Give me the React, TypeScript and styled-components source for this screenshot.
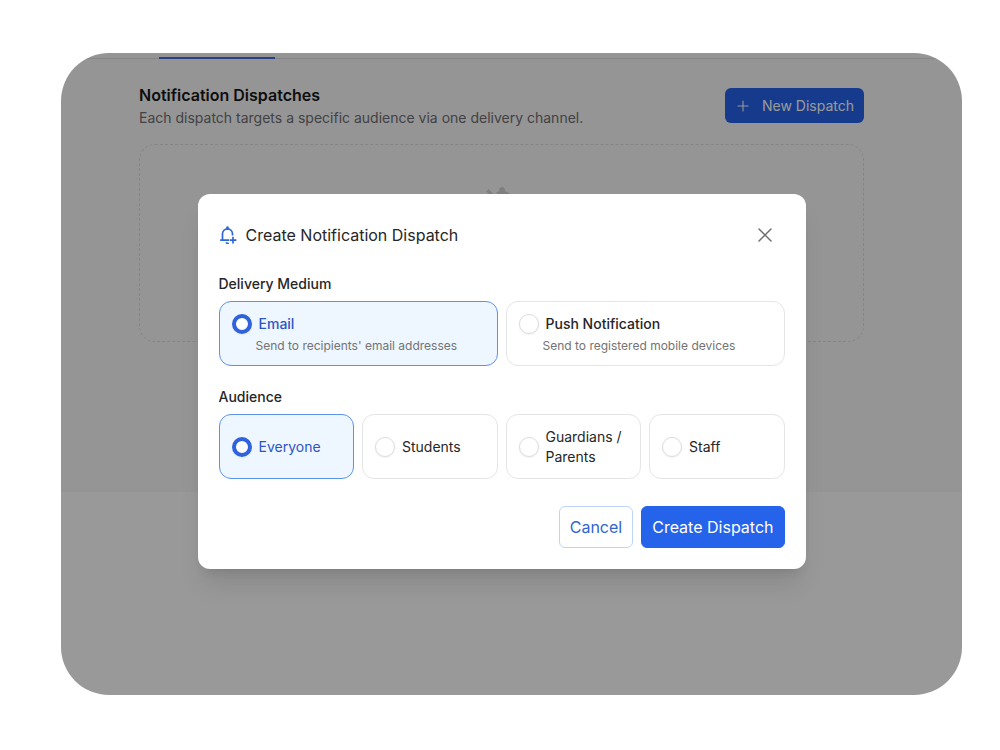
import React from "react";
import styled, { createGlobalStyle } from "styled-components";

const GlobalStyle = createGlobalStyle`
  *, *::before, *::after { box-sizing: border-box; }
  body {
    margin: 0;
    background: #ffffff;
    font-family: Inter, "Liberation Sans", sans-serif;
    color: #262626;
  }
  button, input { font-family: inherit; }
  h1, h2, p, fieldset, legend { margin: 0; padding: 0; border: 0; }
`;

const Stage = styled.div`
  min-height: 100vh;
  padding: 53px 38px 55px 61px;
  display: flex;
`;

const Frame = styled.div`
  position: relative;
  flex: 1;
  min-width: 0;
  display: flex;
  flex-direction: column;
  border-radius: 48px;
  overflow: hidden;
  background: #ffffff;
`;

const Page = styled.main`
  background: #f9f9f9;
  padding-bottom: 150px;
`;

const TabBar = styled.nav`
  height: 6px;
  padding-left: 98px;
  border-bottom: 1px solid #e2e2e4;
`;

const TabIndicator = styled.div`
  width: 116px;
  height: 6px;
  border-bottom: 2px solid #4a68dc;
`;

const Content = styled.div`
  padding: 24px 98px 0 78px;
`;

const SectionHeader = styled.header`
  display: flex;
  justify-content: space-between;
  align-items: center;
  padding-bottom: 16px;
`;

const SectionHeading = styled.div`
  display: grid;
  gap: 1px;
`;

const SectionTitle = styled.h1`
  font-size: 16px;
  line-height: 24px;
  font-weight: 600;
  color: #171717;
`;

const SectionText = styled.p`
  font-size: 14px;
  line-height: 20px;
  color: #6f6f72;
`;

const NewButton = styled.button`
  display: flex;
  align-items: center;
  gap: 11px;
  height: 35px;
  padding: 0 10px;
  border: 0;
  border-radius: 6px;
  background: #2563eb;
  color: #ffffff;
  font-size: 14px;
`;

const EmptyState = styled.section`
  min-height: 198px;
  padding-top: 37px;
  border: 1px dashed #dededf;
  border-radius: 16px;
  display: flex;
  justify-content: center;
  align-items: flex-start;
`;

const Backdrop = styled.div`
  position: absolute;
  inset: 0;
  padding: 141px 20px 0 0;
  display: flex;
  justify-content: center;
  align-items: flex-start;
  background: rgba(0, 0, 0, 0.4);
`;

const Modal = styled.form`
  width: 100%;
  max-width: 608px;
  padding: 20px 21px 21px;
  border-radius: 12px;
  background: #ffffff;
  box-shadow: 0 20px 25px -5px rgba(0, 0, 0, 0.1), 0 8px 10px -6px rgba(0, 0, 0, 0.1);
`;

const ModalHeader = styled.header`
  display: flex;
  align-items: center;
  gap: 9px;
  height: 42px;
  margin-bottom: 18px;
`;

const ModalTitle = styled.h2`
  flex: 1;
  font-size: 16px;
  line-height: 24px;
  font-weight: 400;
`;

const CloseButton = styled.button`
  display: grid;
  place-items: center;
  width: 40px;
  height: 40px;
  padding: 0;
  border: 0;
  background: none;
  color: #6f6f6f;
`;

const Group = styled.fieldset`
  min-width: 0;
  margin-bottom: 21px;
`;

const GroupLabel = styled.legend`
  font-size: 14px;
  line-height: 20px;
  font-weight: 500;
  margin-bottom: 7px;
`;

const Options = styled.div<{ $columns: number }>`
  display: grid;
  grid-template-columns: repeat(${(p) => p.$columns}, minmax(0, 1fr));
  gap: 8px;
`;

const OptionCard = styled.label<{ $selected: boolean }>`
  display: flex;
  flex-direction: column;
  justify-content: center;
  min-height: 65px;
  padding: 0 12px;
  border: 1px solid ${(p) => (p.$selected ? "#5b93ea" : "#e5e5e5")};
  border-radius: 12px;
  background: ${(p) => (p.$selected ? "#eef6ff" : "#ffffff")};
  color: ${(p) => (p.$selected ? "#2f55c4" : "#262626")};
`;

const OptionRow = styled.span`
  display: flex;
  align-items: center;
  gap: 7px;
`;

const Radio = styled.input`
  appearance: none;
  flex: none;
  width: 20px;
  height: 20px;
  margin: 0;
  border: 1px solid #dcdcdc;
  border-radius: 50%;
  background: #ffffff;
  box-shadow: 0 1px 2px rgba(0, 0, 0, 0.06);
  &:checked {
    border: 4px solid #2f62dc;
  }
`;

const OptionName = styled.span<{ $strong?: boolean }>`
  font-size: 14px;
  line-height: 20px;
  font-weight: ${(p) => (p.$strong ? 500 : 400)};
`;

const OptionText = styled.span`
  padding: 4px 0 0 24px;
  font-size: 12px;
  line-height: 16px;
  color: #737373;
`;

const Actions = styled.footer`
  display: flex;
  justify-content: flex-end;
  gap: 8px;
  padding-top: 6px;
`;

const ActionButton = styled.button<{ $primary?: boolean }>`
  height: 42px;
  padding: 0 10px;
  border: 1px solid ${(p) => (p.$primary ? "#2563eb" : "#bfd5f7")};
  border-radius: 6px;
  background: ${(p) => (p.$primary ? "#2563eb" : "#ffffff")};
  color: ${(p) => (p.$primary ? "#ffffff" : "#2f66cf")};
  font-size: 16px;
`;

const BellPlusIcon = () => (
  <svg width="18" height="18" viewBox="0 0 18 18" fill="none" stroke="#2f66d6" strokeWidth="1.7" aria-hidden="true">
    <path d="M1.2 14.2H10M3.5 14V7.8a5 5 0 0 1 10 0V9.4" />
    <path d="M8.5 1.6V2.6" strokeWidth="2.6" strokeLinecap="round" />
    <path d="M7.2 16.3a1.7 1.7 0 0 0 2.6 0.9M14 10.8V17.4M10.7 14.1H17.4" />
  </svg>
);

const CloseIcon = () => (
  <svg width="14" height="14" viewBox="0 0 14 14" fill="none" stroke="currentColor" strokeWidth="1.5" strokeLinecap="round" aria-hidden="true">
    <path d="M1 1L13 13M13 1L1 13" />
  </svg>
);

const PlusIcon = () => (
  <svg width="16" height="16" viewBox="0 0 16 16" fill="none" stroke="currentColor" strokeWidth="1.1" strokeLinecap="round" aria-hidden="true">
    <path d="M8 3V13M3 8H13" />
  </svg>
);

const BellOffIcon = () => (
  <svg width="48" height="48" viewBox="0 0 24 24" fill="#d4d4d6" aria-hidden="true">
    <path d="M20 18.69L7.84 6.14 5.27 3.49 4 4.76l2.8 2.8v.01c-.52.99-.8 2.16-.8 3.42v5l-2 2v1h13.73l2 2L21 19.72l-1-1.03zM12 22c1.11 0 2-.89 2-2h-4c0 1.11.89 2 2 2zm6-7.32V11c0-3.08-1.64-5.64-4.5-6.32V4c0-.83-.67-1.5-1.5-1.5s-1.5.67-1.5 1.5v.68c-.51.11-.98.28-1.42.54L18 14.68z" />
  </svg>
);

interface Option {
  name: string;
  text?: string;
}

const mediums: Option[] = [
  { name: "Email", text: "Send to recipients' email addresses" },
  { name: "Push Notification", text: "Send to registered mobile devices" },
];

const audiences: Option[] = [
  { name: "Everyone" },
  { name: "Students" },
  { name: "Guardians / Parents" },
  { name: "Staff" },
];

interface OptionGroupProps {
  label: string;
  name: string;
  options: Option[];
}

function OptionGroup({ label, name, options }: OptionGroupProps) {
  const [selected, setSelected] = React.useState(options[0].name);
  return (
    <Group>
      <GroupLabel>{label}</GroupLabel>
      <Options $columns={options.length}>
        {options.map((o) => (
          <OptionCard key={o.name} $selected={o.name === selected}>
            <OptionRow>
              <Radio type="radio" name={name} checked={o.name === selected} onChange={() => setSelected(o.name)} />
              <OptionName $strong={Boolean(o.text)}>{o.name}</OptionName>
            </OptionRow>
            {o.text && <OptionText>{o.text}</OptionText>}
          </OptionCard>
        ))}
      </Options>
    </Group>
  );
}

export default function App() {
  return (
    <>
      <GlobalStyle />
      <Stage>
        <Frame>
          <Page>
            <TabBar>
              <TabIndicator />
            </TabBar>
            <Content>
              <SectionHeader>
                <SectionHeading>
                  <SectionTitle>Notification Dispatches</SectionTitle>
                  <SectionText>Each dispatch targets a specific audience via one delivery channel.</SectionText>
                </SectionHeading>
                <NewButton type="button">
                  <PlusIcon />
                  New Dispatch
                </NewButton>
              </SectionHeader>
              <EmptyState>
                <BellOffIcon />
              </EmptyState>
            </Content>
          </Page>
          <Backdrop>
            <Modal role="dialog" aria-labelledby="dispatch-title">
              <ModalHeader>
                <BellPlusIcon />
                <ModalTitle id="dispatch-title">Create Notification Dispatch</ModalTitle>
                <CloseButton type="button" aria-label="Close">
                  <CloseIcon />
                </CloseButton>
              </ModalHeader>
              <OptionGroup label="Delivery Medium" name="medium" options={mediums} />
              <OptionGroup label="Audience" name="audience" options={audiences} />
              <Actions>
                <ActionButton type="button">Cancel</ActionButton>
                <ActionButton type="button" $primary>
                  Create Dispatch
                </ActionButton>
              </Actions>
            </Modal>
          </Backdrop>
        </Frame>
      </Stage>
    </>
  );
}
